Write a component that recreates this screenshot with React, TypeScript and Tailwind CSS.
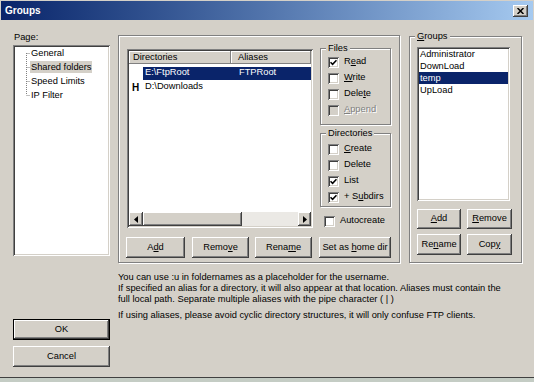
import React from 'react';

// classic win32 bevels
const raised =
  'bg-[#d4d0c8] shadow-[inset_-1px_-1px_#404040,inset_1px_1px_#ffffff,inset_-2px_-2px_#808080,inset_2px_2px_#d4d0c8]';
const sunken =
  'shadow-[inset_1px_1px_#808080,inset_-1px_-1px_#ffffff,inset_2px_2px_#404040,inset_-2px_-2px_#d4d0c8]';
const etched = 'border border-[#808080] shadow-[inset_1px_1px_#ffffff,1px_1px_#ffffff]';
const headerCell = 'bg-[#d4d0c8] shadow-[inset_-1px_-1px_#808080,inset_1px_1px_#ffffff]';

const Btn: React.FC<{ className?: string; children?: React.ReactNode }> = ({ className = '', children }) => (
  <div className={`${raised} flex items-center justify-center ${className}`}>
    {children && <span>{children}</span>}
  </div>
);

const CheckMark = () => (
  <svg width="7" height="7" viewBox="0 0 7 7" className="block">
    <path d="M0.5 3.2 L2.6 5.3 L6.5 1.2" fill="none" stroke="#000" strokeWidth="1.6" />
  </svg>
);

interface CheckProps {
  label: React.ReactNode;
  checked?: boolean;
  disabled?: boolean;
  className?: string;
}

const Check: React.FC<CheckProps> = ({ label, checked, disabled, className = 'h-[16px]' }) => (
  <div className={`flex items-center ${className}`}>
    <span
      className={`w-[11px] h-[11px] flex items-center justify-center ${sunken} ${disabled ? 'bg-[#d4d0c8]' : 'bg-white'}`}
    >
      {checked && <CheckMark />}
    </span>
    <span
      className={`ml-[5px] ${disabled ? 'text-[#808080] [text-shadow:1px_1px_#ffffff]' : ''}`}
    >
      {label}
    </span>
  </div>
);

const GroupBox: React.FC<{ title?: React.ReactNode; className?: string; children: React.ReactNode }> = ({
  title,
  className = '',
  children,
}) => (
  <div className={`relative ${etched} ${className}`}>
    {title && (
      <span className="absolute -top-[7px] left-[5px] px-[2px] bg-[#d4d0c8] leading-[12px]">{title}</span>
    )}
    {children}
  </div>
);

const Arrow: React.FC<{ dir: 'left' | 'right' }> = ({ dir }) => (
  <svg width="4" height="7" viewBox="0 0 4 7" className="block">
    {dir === 'left' ? <path d="M4 0 L0 3.5 L4 7 Z" fill="#000" /> : <path d="M0 0 L4 3.5 L0 7 Z" fill="#000" />}
  </svg>
);

export default function App() {
  const pages = ['General', 'Shared folders', 'Speed Limits', 'IP Filter'];
  const groups = ['Administrator', 'DownLoad', 'temp', 'UpLoad'];

  return (
    <div className="w-[534px] h-[382px] bg-[#d4d0c8] font-['Liberation_Sans',Arial,sans-serif] text-[9.3px] text-black flex flex-col overflow-hidden">
      {/* title bar */}
      <div className="px-[1px] pt-[1px]">
        <div className="h-[19px] bg-gradient-to-r from-[#0a246a] to-[#a6caf0] flex items-center pl-[4px] pr-[5px]">
          <span className="text-white font-bold text-[10px]">Groups</span>
          <Btn className="ml-auto w-[15px] h-[12px]">
            <svg width="7" height="6" viewBox="0 0 7 6" className="block">
              <path d="M0.5 0 L6.5 6 M6.5 0 L0.5 6" stroke="#000" strokeWidth="1.5" />
            </svg>
          </Btn>
        </div>
      </div>

      <div className="flex-1 flex pl-[13px]">
        {/* left column */}
        <div className="w-[97px] flex flex-col">
          <div className="mt-[11px] h-[12px] leading-[12px] pl-[1px]">Page:</div>
          <div className={`mt-[2px] h-[211px] bg-white ${sunken} pt-[1px] pl-[13px] flex`}>
            <svg width="4" height="56" viewBox="0 0 4 56" className="shrink-0">
              <g stroke="#808080" strokeWidth="1" strokeDasharray="1 1" fill="none">
                <path d="M0.5 7 V49" />
                <path d="M0.5 7.5 H4 M0.5 21.5 H4 M0.5 35.5 H4 M0.5 49.5 H4" />
              </g>
            </svg>
            <div className="flex flex-col">
              {pages.map((p) => (
                <div key={p} className="h-[14px] flex items-center">
                  <span className={`px-[1px] leading-[12px] ${p === 'Shared folders' ? 'bg-[#d4d0c8]' : ''}`}>{p}</span>
                </div>
              ))}
            </div>
          </div>
          <div className="mt-[63px] h-[21px] border border-black">
            <Btn className="h-full">OK</Btn>
          </div>
          <Btn className="mt-[6px] h-[21px]">Cancel</Btn>
        </div>

        {/* right area */}
        <div className="ml-[8px] flex flex-col">
          <div className="flex mt-[15px]">
            {/* shared folders group */}
            <GroupBox className="w-[282px] h-[228px] pl-[8px] pt-[12px]">
              <div className="flex">
                <div className={`mt-[1px] w-[186px] h-[179px] bg-white ${sunken} p-[2px] flex flex-col`}>
                  <div className="flex h-[13px] leading-[13px]">
                    <div className={`w-[102px] pl-[4px] ${headerCell}`}>Directories</div>
                    <div className={`flex-1 pl-[7px] ${headerCell}`}>Aliases</div>
                  </div>
                  <div className="mt-[2px] h-[14px] flex items-center">
                    <span className="w-[14px]" />
                    <div className="flex-1 h-[13px] bg-[#0a246a] text-white flex items-center">
                      <span className="w-[88px] pl-[2px]">E:\FtpRoot</span>
                      <span className="pl-[8px]">FTPRoot</span>
                    </div>
                  </div>
                  <div className="h-[14px] flex items-center">
                    <span className="w-[14px] pl-[3px] font-bold text-[10px]">H</span>
                    <span className="pl-[2px]">D:\Downloads</span>
                  </div>
                  <div className="flex-1" />
                  <div className="h-[14px] flex">
                    <Btn className="w-[14px] h-full">
                      <Arrow dir="left" />
                    </Btn>
                    <Btn className="w-[99px] h-full" />
                    <div className="flex-1 bg-[#ebe9e5]" />
                    <Btn className="w-[13px] h-full">
                      <Arrow dir="right" />
                    </Btn>
                  </div>
                </div>

                <div className="ml-[7px] w-[71px] flex flex-col">
                  <GroupBox title="Files" className="h-[77px] pt-[5px] pl-[7px]">
                    <Check checked label={<>R<u>e</u>ad</>} />
                    <Check label={<><u>W</u>rite</>} />
                    <Check label={<>Dele<u>t</u>e</>} />
                    <Check disabled label={<><u>A</u>ppend</>} />
                  </GroupBox>
                  <GroupBox title="Directories" className="mt-[8px] h-[74px] pt-[7px] pl-[7px]">
                    <Check label={<><u>C</u>reate</>} />
                    <Check label="Delete" />
                    <Check checked label="List" />
                    <Check checked label={<>+ S<u>u</u>bdirs</>} />
                  </GroupBox>
                  <Check className="mt-[7px] h-[14px] pl-[4px]" label="Autocreate" />
                </div>
              </div>

              <div className="mt-[9px] h-[21px] flex">
                <Btn className="w-[59px] -ml-[1px]">A<u>d</u>d</Btn>
                <Btn className="w-[57px] ml-[7px]">Remo<u>v</u>e</Btn>
                <Btn className="w-[57px] ml-[6px]">Rena<u>m</u>e</Btn>
                <Btn className="w-[72px] ml-[7px]">Set as <u>h</u>ome dir</Btn>
              </div>
            </GroupBox>

            {/* groups group */}
            <GroupBox title={<><u>G</u>roups</>} className="ml-[9px] mt-[1px] w-[113px] h-[227px] pl-[7px] pt-[10px]">
              <div className={`w-[93px] h-[154px] bg-white ${sunken} pt-[1px] px-[2px]`}>
                {groups.map((g) => (
                  <div
                    key={g}
                    className={`h-[12px] leading-[12px] pl-[1px] ${g === 'temp' ? 'bg-[#0a246a] text-white' : ''}`}
                  >
                    {g}
                  </div>
                ))}
              </div>
              <div className="mt-[8px] h-[20px] flex">
                <Btn className="w-[44px]"><u>A</u>dd</Btn>
                <Btn className="w-[45px] ml-[6px]"><u>R</u>emove</Btn>
              </div>
              <div className="mt-[5px] h-[21px] flex">
                <Btn className="w-[44px]">Re<u>n</u>ame</Btn>
                <Btn className="w-[45px] ml-[6px]">Cop<u>y</u></Btn>
              </div>
            </GroupBox>
          </div>

          <div className="mt-[9px] leading-[11px]">
            <p>You can use :u in foldernames as a placeholder for the username.</p>
            <p>
              If specified an alias for a directory, it will also appear at that location. Aliases must contain the
              <br />
              full local path. Separate multiple aliases with the pipe character ( | )
            </p>
            <p className="mt-[5px]">If using aliases, please avoid cyclic directory structures, it will only confuse FTP clients.</p>
          </div>
        </div>
      </div>

      <div className="h-[1px] bg-[#404040]" />
      <div className="h-[4px] bg-[#c4ccc4]" />
    </div>
  );
}
